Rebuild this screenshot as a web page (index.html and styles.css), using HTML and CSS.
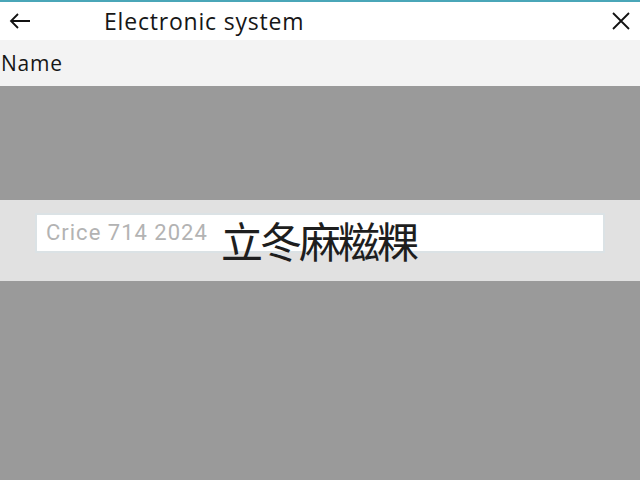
FILE: index.html
```html
<!DOCTYPE html>
<html lang="zh">
<head>
  <meta charset="UTF-8">
  <title>Electronic system</title>
  <link rel="stylesheet" href="styles.css">
</head>
<body>
  <div class="header">
    <span class="back">
      <svg width="22" height="16" viewBox="0 0 22 16"><path d="M21 8H2M9 1L2 8l7 7" fill="none" stroke="#111" stroke-width="1.8"/></svg>
    </span>
    <span class="title">Electronic system</span>
    <span class="close">
      <svg width="18" height="18" viewBox="0 0 18 18"><path d="M1 1l16 16M17 1L1 17" fill="none" stroke="#111" stroke-width="1.8"/></svg>
    </span>
  </div>
  <div class="name-row">Name</div>
  <div class="shade top"></div>
  <div class="input-band">
    <div class="input-box">Crice 714 2024</div>
    <div class="big-text">立冬麻糍粿</div>
  </div>
  <div class="shade bottom"></div>
</body>
</html>
```

FILE: styles.css
```css
body {
  margin: 0;
  padding: 0;
  font-family: 'Open Sans', 'Noto Sans', sans-serif;
  color: #222;
  width: 640px;
  height: 480px;
  overflow: hidden;
}
.header {
  height: 40px;
  background-color: #fff;
  border-top: 2px solid #4aa6b8;
  box-sizing: border-box;
  display: flex;
  align-items: center;
}
.back {
  display: flex;
  margin-left: 9px;
}
.title {
  margin-left: 73px;
  font-size: 23px;
  letter-spacing: 0.8px;
  color: #161616;
}
.close {
  display: flex;
  margin-left: auto;
  margin-right: 10px;
}
.name-row {
  height: 46px;
  background-color: #f3f3f3;
  font-size: 21px;
  letter-spacing: 0.8px;
  line-height: 46px;
  padding-left: 1px;
  color: #161616;
}
.shade {
  background-color: #9a9a9a;
}
.shade.top {
  height: 114px;
}
.shade.bottom {
  height: 199px;
}
.input-band {
  height: 81px;
  background-color: #e1e1e1;
  position: relative;
  padding-top: 13px;
  box-sizing: border-box;
}
.input-box {
  margin-left: 35px;
  width: 570px;
  height: 40px;
  box-sizing: border-box;
  background-color: #fff;
  border: 2px solid #dbe2e5;
  padding-left: 9px;
  line-height: 36px;
  font-family: 'Roboto', sans-serif;
  font-size: 22px;
  letter-spacing: 1px;
  color: #b3b3b3;
}
.big-text {
  position: absolute;
  left: 221px;
  top: 14px;
  font-family: 'Noto Sans CJK SC', sans-serif;
  font-size: 42px;
  letter-spacing: -3px;
  line-height: 52px;
  color: #1e1e1e;
}
```
